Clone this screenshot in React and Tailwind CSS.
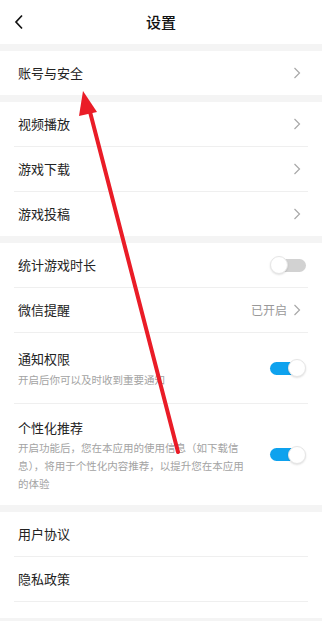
import React from "react";

const Chevron = () => (
  <svg width="8" height="12" viewBox="0 0 8 12" fill="none">
    <path d="M1.5 1 L6.5 6 L1.5 11" stroke="#a8a8a8" strokeWidth="1.2" />
  </svg>
);

const Toggle = ({ on }) =>
  on ? (
    <div className="relative w-[36px] h-[18px] flex items-center">
      <div className="w-[34px] h-[13px] rounded-full bg-[#0ea2ee]" />
      <div className="absolute right-0 top-0 w-[18px] h-[18px] rounded-full bg-white border border-[#e6e6e6] shadow-[0_1px_2px_rgba(0,0,0,0.12)]" />
    </div>
  ) : (
    <div className="relative w-[36px] h-[18px] flex items-center justify-end">
      <div className="w-[34px] h-[13px] rounded-full bg-[#d2d2d2]" />
      <div className="absolute left-0 top-0 w-[18px] h-[18px] rounded-full bg-white border border-[#e6e6e6] shadow-[0_1px_2px_rgba(0,0,0,0.12)]" />
    </div>
  );

const Row = ({ label, right, divider = true }) => (
  <div className="px-[14px]">
    <div className={`flex items-center justify-between pl-[4px] pr-[7px] ${divider ? "h-[45px] border-b border-[#efefef]" : "h-[44px]"}`}>
      <span className="text-[13px] text-[#222]">{label}</span>
      {right}
    </div>
  </div>
);

export default function App() {
  return (
    <div
      className="relative w-[322px] h-[621px] bg-[#f4f4f4] overflow-hidden"
      style={{ fontFamily: '"Noto Sans CJK SC", "Noto Sans", sans-serif' }}
    >
      {/* header */}
      <div className="h-[44px] bg-white flex items-center relative">
        <div className="pl-[14px]">
          <svg width="10" height="16" viewBox="0 0 10 16" fill="none">
            <path d="M8 1.5 L2 8 L8 14.5" stroke="#111" strokeWidth="1.7" />
          </svg>
        </div>
        <div className="absolute inset-0 flex items-center justify-center text-[15px] font-medium text-[#111]">
          设置
        </div>
      </div>

      <div className="mt-[7px] bg-white">
        <Row label="账号与安全" right={<Chevron />} divider={false} />
      </div>

      <div className="mt-[7px] bg-white">
        <Row label="视频播放" right={<Chevron />} />
        <Row label="游戏下载" right={<Chevron />} />
        <Row label="游戏投稿" right={<Chevron />} divider={false} />
      </div>

      <div className="mt-[7px] bg-white">
        <div className="px-[14px]">
          <div className="h-[45px] flex items-center justify-between pl-[4px] pr-[2px] border-b border-[#efefef]">
            <span className="text-[13px] text-[#222]">统计游戏时长</span>
            <Toggle on={false} />
          </div>
        </div>
        <div className="px-[14px]">
          <div className="h-[45px] flex items-center justify-between pl-[4px] pr-[7px] border-b border-[#efefef]">
            <span className="text-[13px] text-[#222]">微信提醒</span>
            <div className="flex items-center gap-[6px]">
              <span className="text-[12px] text-[#999]">已开启</span>
              <Chevron />
            </div>
          </div>
        </div>
        <div className="px-[14px]">
          <div className="h-[71px] flex items-center justify-between pl-[4px] pr-[2px] border-b border-[#efefef]">
            <div className="flex flex-col">
              <span className="text-[13px] leading-[20px] text-[#222]">通知权限</span>
              <span className="text-[10.5px] leading-[16px] mt-[3px] text-[#a3a3a3]">开启后你可以及时收到重要通知</span>
            </div>
            <Toggle on={true} />
          </div>
        </div>
        <div className="px-[14px]">
          <div className="h-[101px] flex items-center justify-between pl-[4px] pr-[2px]">
            <div className="flex flex-col w-[232px] pt-[2px]">
              <span className="text-[13px] leading-[20px] text-[#222]">个性化推荐</span>
              <span className="text-[10.5px] leading-[18px] mt-[1px] text-[#a3a3a3]">
                开启功能后，您在本应用的使用信息（如下载信息），将用于个性化内容推荐，以提升您在本应用的体验
              </span>
            </div>
            <Toggle on={true} />
          </div>
        </div>
      </div>

      <div className="mt-[7px] bg-white pb-[16px]">
        <Row label="用户协议" right={null} />
        <Row label="隐私政策" right={null} />
      </div>

      {/* red annotation arrow */}
      <svg className="absolute left-0 top-0 pointer-events-none" width="322" height="621" viewBox="0 0 322 621">
        <line x1="178" y1="452" x2="89" y2="108" stroke="#ea1c27" strokeWidth="4" strokeLinecap="round" />
        <polygon points="83,91 97,112 79,116" fill="#ea1c27" />
      </svg>
    </div>
  );
}
